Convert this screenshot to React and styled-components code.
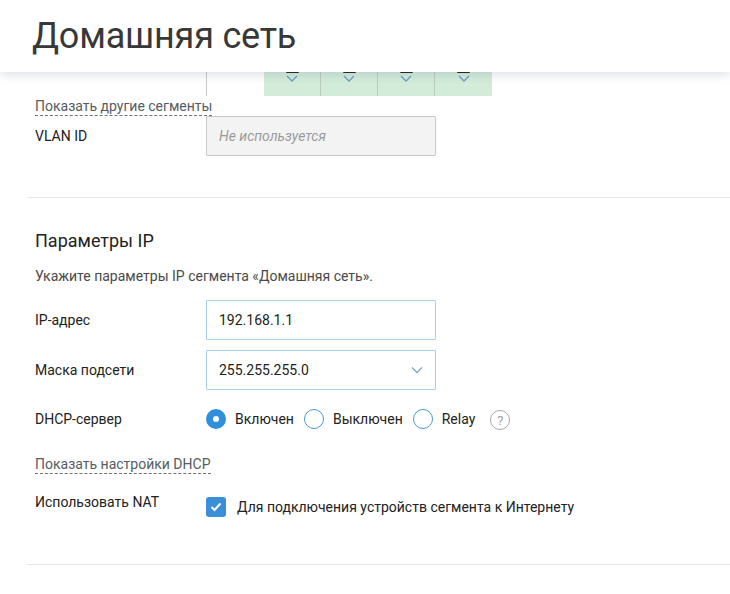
import React from 'react';
import styled, { createGlobalStyle } from 'styled-components';

//colors
const COLORS = {
  TEXT: '#222',
  MUTED: '#555c63',
  BLUE: '#2f8fdb',
  DIVIDER: '#e4e9ee',
  GREEN: '#d3ecd9',
};

const GlobalStyle = createGlobalStyle`
  html, body {
    margin: 0;
    padding: 0;
    background: #fff;
  }
  body {
    font-family: Roboto, "Noto Sans", "Liberation Sans", sans-serif;
    color: ${COLORS.TEXT};
  }
`;

const Page = styled.div`
  position: relative;
  width: 730px;
  height: 594px;
  overflow: hidden;
  background: #fff;
`;

const Header = styled.header`
  position: absolute;
  top: 0;
  left: 0;
  right: 0;
  height: 72px;
  display: flex;
  align-items: center;
  padding-left: 32px;
  background: #fff;
  box-shadow: 0 3px 9px rgba(70, 90, 130, 0.18);
  z-index: 2;
`;

const Title = styled.h1`
  margin: 0;
  font-size: 36px;
  font-weight: 400;
  color: #383838;
  letter-spacing: -0.2px;
`;

const Content = styled.div`
  padding-top: 60px;
`;

const Strip = styled.div`
  display: flex;
  padding-left: 206px;
  height: 36px;
`;

const StripLine = styled.div`
  width: 57px;
  border-left: 1px solid #c9c9c9;
`;

const Tile = styled.div`
  width: 57px;
  height: 36px;
  background: ${COLORS.GREEN};
  border-right: 1px solid #bccbbf;
  box-sizing: border-box;
  display: flex;
  flex-direction: column;
  align-items: center;
  padding-top: 11px;
  gap: 2px;
  &:last-child {
    border-right: none;
  }
`;

const TileMark = styled.span`
  width: 13px;
  height: 2px;
  background: #222;
  border-radius: 1px;
`;

const Section = styled.section`
  margin-left: 27px;
  padding-left: 8px;
  border-bottom: 1px solid ${COLORS.DIVIDER};
  padding-bottom: ${p => p.$bottom}px;
  padding-top: ${p => p.$top}px;
`;

const DashedLink = styled.a`
  display: inline-block;
  font-size: 14px;
  line-height: 16px;
  color: ${COLORS.MUTED};
  text-decoration: none;
  border-bottom: 1px dashed #6a737b;
  padding-bottom: 1px;
  margin-top: ${p => p.$mt || 0}px;
  margin-bottom: ${p => p.$mb || 0}px;
  cursor: pointer;
`;

const Row = styled.div`
  display: grid;
  grid-template-columns: 171px auto;
  align-items: ${p => p.$align || 'center'};
  margin-bottom: ${p => p.$mb || 0}px;
`;

const Label = styled.div`
  font-size: 14px;
  line-height: 16px;
  color: ${COLORS.TEXT};
  margin-top: ${p => p.$mt || 0}px;
`;

const Input = styled.div`
  position: relative;
  width: 230px;
  height: 40px;
  box-sizing: border-box;
  border: 1px solid ${p => (p.$disabled ? '#c9c9c9' : '#a9cde6')};
  background: ${p => (p.$disabled ? '#f3f3f3' : '#fff')};
  border-radius: 1px;
  display: flex;
  align-items: center;
  padding: 0 12px;
  font-size: 14px;
  color: ${p => (p.$disabled ? '#9a9a9a' : COLORS.TEXT)};
  font-style: ${p => (p.$disabled ? 'italic' : 'normal')};
`;

const SelectArrow = styled.svg`
  position: absolute;
  right: 12px;
  top: 15px;
`;

const SectionTitle = styled.h2`
  margin: 0 0 17px;
  font-size: 18px;
  font-weight: 400;
  color: #222;
`;

const Hint = styled.p`
  margin: 0 0 16px;
  font-size: 14px;
  color: #4a4a4a;
`;

const Radios = styled.div`
  display: flex;
  align-items: center;
`;

const RadioItem = styled.label`
  display: flex;
  align-items: center;
  gap: 9px;
  margin-right: 10px;
  font-size: 14px;
  color: ${COLORS.TEXT};
`;

const RadioCircle = styled.span`
  width: 20px;
  height: 20px;
  box-sizing: border-box;
  border-radius: 50%;
  border: ${p => (p.$on ? `7px solid ${COLORS.BLUE}` : '1px solid #4a9ad8')};
  background: #fff;
`;

const HelpIcon = styled.span`
  width: 20px;
  height: 20px;
  box-sizing: border-box;
  border-radius: 50%;
  border: 1px solid #a8a8a8;
  color: #a0a0a0;
  font-size: 13px;
  display: flex;
  align-items: center;
  justify-content: center;
  margin-left: 5px;
  margin-top: 3px;
`;

const Check = styled.label`
  display: flex;
  align-items: center;
  gap: 11px;
  font-size: 14px;
  color: ${COLORS.TEXT};
`;

const CheckBox = styled.span`
  width: 20px;
  height: 20px;
  border-radius: 3px;
  background: #3a8fd8;
  display: flex;
  align-items: center;
  justify-content: center;
`;

const Chevron = ({ color = '#7fa6c6', w = 12 }) => (
  <svg width={w} height={w / 2 + 1} viewBox="0 0 12 7" fill="none">
    <path d="M1 1l5 5 5-5" stroke={color} strokeWidth="1.3" />
  </svg>
);

export default function App() {
  return (
    <Page>
      <GlobalStyle />
      <Header>
        <Title>Домашняя сеть</Title>
      </Header>

      <Content>
        <Strip>
          <StripLine />
          {[0, 1, 2, 3].map(i => (
            <Tile key={i}>
              <TileMark />
              <Chevron color="#6f9cc2" />
            </Tile>
          ))}
        </Strip>

        <Section $top={0} $bottom={41}>
          <DashedLink $mt={1}>Показать другие сегменты</DashedLink>
          <Row>
            <Label>VLAN ID</Label>
            <Input $disabled>Не используется</Input>
          </Row>
        </Section>

        <Section $top={32} $bottom={47}>
          <SectionTitle>Параметры IP</SectionTitle>
          <Hint>Укажите параметры IP сегмента «Домашняя сеть».</Hint>
          <Row $mb={10}>
            <Label>IP-адрес</Label>
            <Input>192.168.1.1</Input>
          </Row>
          <Row $mb={17}>
            <Label>Маска подсети</Label>
            <Input>
              255.255.255.0
              <SelectArrow width="12" height="8" viewBox="0 0 12 7" fill="none">
                <path d="M1 1l5 5 5-5" stroke="#7fa6c6" strokeWidth="1.3" />
              </SelectArrow>
            </Input>
          </Row>
          <Row $mb={24}>
            <Label>DHCP-сервер</Label>
            <Radios>
              <RadioItem>
                <RadioCircle $on />
                Включен
              </RadioItem>
              <RadioItem>
                <RadioCircle />
                Выключен
              </RadioItem>
              <RadioItem>
                <RadioCircle />
                Relay
              </RadioItem>
              <HelpIcon>?</HelpIcon>
            </Radios>
          </Row>
          <DashedLink $mb={23}>Показать настройки DHCP</DashedLink>
          <Row $align="start">
            <Label $mt={-3}>Использовать NAT</Label>
            <Check>
              <CheckBox>
                <svg width="12" height="10" viewBox="0 0 12 10" fill="none">
                  <path d="M1.5 5l3 3 6-6.5" stroke="#fff" strokeWidth="2" />
                </svg>
              </CheckBox>
              Для подключения устройств сегмента к Интернету
            </Check>
          </Row>
        </Section>
      </Content>
    </Page>
  );
}
